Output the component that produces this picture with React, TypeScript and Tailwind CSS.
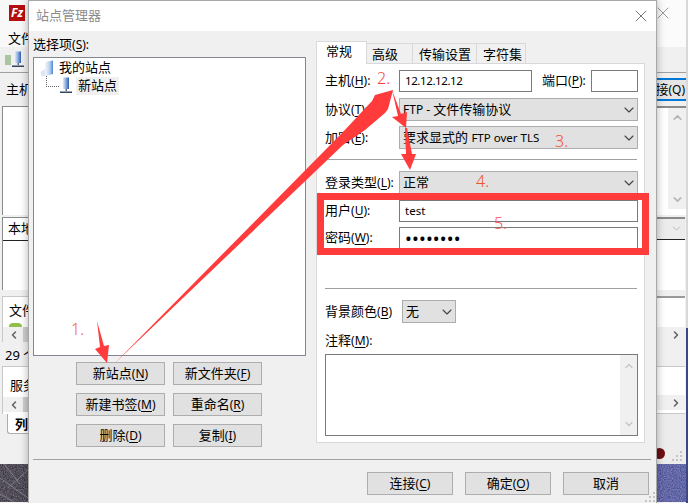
import React from 'react';
import { ChevronDown, ChevronLeft, ChevronRight, ChevronUp, X } from 'lucide-react';

const FONT = '"Noto Sans", "Noto Sans CJK SC", sans-serif';

// 括号里带下划线的快捷键，如 主机(H):
const Key = ({ label, k, colon }: { label: string; k: string; colon?: boolean }) => (
    <span className="whitespace-nowrap">
        {label}
        <span className="text-[12px]">(<span className="underline underline-offset-2">{k}</span>){colon ? ':' : ''}</span>
    </span>
);

const Latin = ({ children }: { children: React.ReactNode }) => <span className="text-[11.5px]">{children}</span>;

const Button = ({ children, className }: { children: React.ReactNode; className: string }) => (
    <div className={`h-[23px] flex items-center justify-center bg-[#e1e1e1] border border-[#adadad] ${className}`}>{children}</div>
);

const Select = ({ children, className }: { children: React.ReactNode; className: string }) => (
    <div className={`h-[23px] flex items-center justify-between bg-[#e1e1e1] border border-[#adadad] pl-[3px] ${className}`}>
        <span className="whitespace-nowrap">{children}</span>
        <ChevronDown size={16} strokeWidth={1.7} className="text-[#444]" />
    </div>
);

const Input = ({ children, className }: { children?: React.ReactNode; className: string }) => (
    <div className={`flex items-center bg-white border border-[#7a7a7a] pl-[5px] ${className}`}>{children}</div>
);

const FormRow = ({ label, children, className }: { label: React.ReactNode; children: React.ReactNode; className: string }) => (
    <div className={`flex items-center ${className}`}>
        <div className="w-[74px] shrink-0">{label}</div>
        {children}
    </div>
);

const ServerIcon = ({ id }: { id: string }) => (
    <svg width="14" height="17" viewBox="0 0 14 17" className="shrink-0">
        <defs>
            <linearGradient id={id} x1="0" y1="0" x2="1" y2="0">
                <stop offset="0%" stopColor="#dfe9f7" />
                <stop offset="55%" stopColor="#7fa3dc" />
                <stop offset="100%" stopColor="#2f5da8" />
            </linearGradient>
        </defs>
        <path d="M4 0.5 H10 V12 H4 Z" fill={`url(#${id})`} />
        <path d="M6.5 12 H8 V14 H6.5 Z" fill="#5a6a80" />
        <path d="M1 14.5 H13 V16 H1 Z" fill="#33445f" />
    </svg>
);

const FolderIcon = () => (
    <svg width="14" height="17" viewBox="0 0 14 17" className="shrink-0">
        <defs>
            <linearGradient id="folder-g" x1="0" y1="0" x2="1" y2="0">
                <stop offset="0%" stopColor="#f4f7fb" />
                <stop offset="60%" stopColor="#b9d0ee" />
                <stop offset="100%" stopColor="#4d86d3" />
            </linearGradient>
        </defs>
        <path d="M5 2 L13 0.5 V14 L5 16 Z" fill="url(#folder-g)" />
        <path d="M0.5 12 L5 9 V16 H1.5 Z" fill="#dce6f2" />
    </svg>
);

// 窗口右下角的拖动点
const Grip = ({ className }: { className: string }) => (
    <svg width="11" height="11" viewBox="0 0 11 11" className={className}>
        <path d="M8 0 h2 v2 h-2 Z M4 4 h2 v2 h-2 Z M8 4 h2 v2 h-2 Z M0 8 h2 v2 h-2 Z M4 8 h2 v2 h-2 Z M8 8 h2 v2 h-2 Z" fill="#c4c4c4" />
    </svg>
);

// 桌面壁纸的噪点
const Wallpaper = ({ id, matrix, base, lines }: { id: string; matrix: string; base: string; lines?: boolean }) => (
    <svg width="100%" height="38" className="block">
        <filter id={id}>
            <feTurbulence type="fractalNoise" baseFrequency="0.9" numOctaves="2" />
            <feColorMatrix type="matrix" values={matrix} />
        </filter>
        <rect width="100%" height="38" fill={base} />
        <rect width="100%" height="38" filter={`url(#${id})`} />
        {lines && <path d="M0 14 L28 34 M0 30 L14 38 M4 0 L20 20 M28 6 L8 24" stroke="#8d8a94" strokeWidth="0.8" />}
    </svg>
);

const HScroll = ({ right }: { right?: boolean }) => (
    <div className={`h-[15px] shrink-0 bg-[#f0f0f0] flex items-center text-[#606060] ${right ? 'justify-end pr-[3px]' : 'pl-[5px]'}`}>
        {right ? <ChevronRight size={12} strokeWidth={3} /> : <ChevronLeft size={12} strokeWidth={3} />}
        {!right && <div className="ml-[3px] flex-1 h-full bg-[#cdcdcd]" />}
    </div>
);

const LeftStrip = () => (
    <div className="w-[28px] shrink-0 h-full flex flex-col overflow-hidden bg-[#f0f0f0] text-[13px]">
        <div className="h-[31px] bg-[#f8f8f8] pt-[5px] pl-[9px] shrink-0">
            <div className="w-[16px] h-[16px] bg-[#b30f0f] flex items-center justify-center text-white text-[12px] leading-none font-bold italic">Fz</div>
        </div>
        <div className="h-[16px] bg-[#f8f8f8] pl-[8px] leading-[14px] whitespace-nowrap shrink-0">文件</div>
        <div className="h-[25px] pl-[5px] pt-[4px] shrink-0 flex">
            <div className="w-[6px] h-[10px] mt-[4px] bg-[#a9c79f]" />
            <ServerIcon id="srv-bg" />
        </div>
        <div className="h-[34px] border-t border-[#a0a0a0] pl-[6px] pt-[7px] whitespace-nowrap shrink-0">主机</div>
        <div className="h-[109px] ml-[2px] bg-white border-l border-t border-[#8a8a8a] shrink-0" />
        <div className="h-[2px] shrink-0" />
        <div className="h-[73px] ml-[2px] bg-white border-l border-t border-[#8a8a8a] shrink-0">
            <div className="h-[23px] pl-[5px] border-b border-[#222] whitespace-nowrap pt-[1px]">本地</div>
        </div>
        <div className="h-[6px] shrink-0" />
        <div className="h-[46px] ml-[2px] bg-white border-l border-t border-[#c8c8c8] shrink-0 overflow-hidden">
            <div className="h-[26px] pl-[6px] pt-[4px] whitespace-nowrap">文件</div>
            <div className="ml-[6px] w-[13px] h-[4px] bg-[#8fc04a] rounded-t-full" />
            <HScroll />
        </div>
        <div className="h-[24px] pl-[5px] pt-[4px] whitespace-nowrap shrink-0">29 个</div>
        <div className="h-[48px] ml-[2px] bg-white border-l border-t border-[#c8c8c8] shrink-0 overflow-hidden">
            <div className="h-[30px] pl-[7px] pt-[9px] whitespace-nowrap">服务</div>
            <HScroll />
        </div>
        <div className="h-[50px] shrink-0 pl-[7px]">
            <div className="h-[20px] bg-white border-l border-b border-[#adadad] rounded-bl-[3px] pl-[7px] font-bold whitespace-nowrap leading-[20px]">列</div>
        </div>
        <Wallpaper id="wp-left" base="#2f2b36" lines matrix="0 0 0 0 0.5  0 0 0 0 0.47  0 0 0 0 0.55  0 0 0 0.7 -0.1" />
    </div>
);

const RightStrip = () => (
    <div className="w-[31px] shrink-0 h-full flex overflow-hidden bg-[#f0f0f0] text-[13px]">
        <div className="w-[29px] shrink-0 h-full flex flex-col">
            <div className="h-[47px] bg-[#fbfbfb] shrink-0 pt-[3px] text-[#999]">
                <X size={20} strokeWidth={1.2} className="-ml-[4px]" />
            </div>
            <div className="h-[25px] shrink-0" />
            <div className="h-[34px] border-t border-[#a0a0a0] shrink-0 pt-[5px]">
                <div className="h-[23px] bg-[#e5e5e5] border-y-2 border-[#0078d7] whitespace-nowrap flex items-center justify-end leading-none pr-[1px]">接<span className="text-[12px]">(Q)</span></div>
            </div>
            <div className="h-[109px] bg-white border-t-2 border-[#8a8a8a] shrink-0 flex justify-end">
                <div className="w-[18px] h-[101px] bg-[#f0f0f0] flex flex-col justify-between items-center py-[3px] text-[#b5b5b5]">
                    <ChevronUp size={13} strokeWidth={3} />
                    <ChevronDown size={13} strokeWidth={3} />
                </div>
            </div>
            <div className="h-[2px] shrink-0" />
            <div className="h-[73px] mr-[1px] bg-white border-t-2 border-[#8a8a8a] shrink-0">
                <div className="h-[21px] bg-[#ececec] border-b border-[#222] flex justify-end pr-[2px] pt-[3px] text-[#b0b0b0]">
                    <ChevronDown size={13} strokeWidth={1.5} />
                </div>
            </div>
            <div className="h-[6px] shrink-0" />
            <div className="h-[46px] mr-[1px] bg-white border-t-2 border-[#9a9a9a] shrink-0 flex flex-col justify-end">
                <HScroll right />
            </div>
            <div className="h-[24px] shrink-0" />
            <div className="h-[48px] mr-[1px] bg-white border-t border-[#c8c8c8] border-b shrink-0 flex flex-col justify-end pb-[3px]">
                <HScroll right />
            </div>
            <div className="h-[50px] shrink-0 bg-[#ececec] relative">
                <div className="w-[11px] h-[11px] rounded-full bg-[#6e0f12] mt-[34px] -ml-[3px]" />
                <Grip className="absolute right-[3px] bottom-[2px]" />
            </div>
            <Wallpaper id="wp-right" base="#3c4688" matrix="0 0 0 0 0.42  0 0 0 0 0.38  0 0 0 0 0.75  0 0 0 0.9 -0.1" />
        </div>
        <div className="w-[2px] shrink-0 h-full flex flex-col">
            <div className="h-[328px] shrink-0 bg-[#d8d8d8]" />
            <div className="flex-1 bg-[#3c4688]" />
        </div>
    </div>
);

const TabPanel = () => (
    <div className="h-[380px] bg-white border border-[#d9d9d9] pl-[8px] pr-[6px] pt-[6px] flex flex-col">
        <FormRow label={<Key label="主机" k="H" colon />} className="h-[22px]">
            <Input className="w-[133px] h-[22px]"><span className="text-[11.5px] tracking-[-0.4px]">12.12.12.12</span></Input>
            <div className="w-[59px] pl-[10px]"><Key label="端口" k="P" colon /></div>
            <Input className="w-[47px] h-[22px]" />
        </FormRow>
        <FormRow label={<Key label="协议" k="T" colon />} className="h-[23px] mt-[6px]">
            <Select className="w-[239px]"><span className="text-[12px]">FTP - </span>文件传输协议</Select>
        </FormRow>
        <FormRow label={<Key label="加密" k="E" colon />} className="h-[23px] mt-[5px]">
            <Select className="w-[239px]">要求显式的 <Latin>FTP over TLS</Latin></Select>
        </FormRow>
        <div className="h-px bg-[#a0a0a0] mt-[10px] w-[312px]" />
        <FormRow label={<Key label="登录类型" k="L" colon />} className="h-[23px] mt-[11px]">
            <Select className="w-[239px]">正常</Select>
        </FormRow>
        <FormRow label={<Key label="用户" k="U" colon />} className="h-[22px] mt-[6px]">
            <Input className="w-[239px] h-[22px]"><Latin>test</Latin></Input>
        </FormRow>
        <FormRow label={<Key label="密码" k="W" colon />} className="h-[22px] mt-[5px]">
            <Input className="w-[239px] h-[22px]"><span className="text-[18px] leading-none tracking-[0.2px]">••••••••</span></Input>
        </FormRow>
        <div className="h-px bg-[#a0a0a0] mt-[39px] w-[312px]" />
        <div className="flex items-center h-[23px] mt-[11px]">
            <div className="w-[77px] shrink-0"><Key label="背景颜色" k="B" /></div>
            <Select className="w-[54px]">无</Select>
        </div>
        <div className="h-[14px] leading-[14px] mt-[10px]"><Key label="注释" k="M" colon /></div>
        <div className="h-[82px] w-[313px] mt-[7px] bg-white border border-[#7a7a7a] flex justify-end">
            <div className="w-[17px] bg-[#f0f0f0] flex flex-col justify-between items-center py-[5px] text-[#c4c4c4]">
                <ChevronUp size={12} strokeWidth={2.5} />
                <ChevronDown size={12} strokeWidth={2.5} />
            </div>
        </div>
    </div>
);

const Annotations = () => (
    <div className="absolute inset-0 z-20 pointer-events-none">
        <svg width="688" height="503" className="absolute inset-0">
            <g fill="#ff3b3b">
                <path d="M97 321 L104 346 L109 345 L107 363 L95 349 L100 347 Z" />
                <path d="M115 363 L343 132 L372 101 L375 95 L393 90 L388 109 L385 113 L365 130 L343 145 Z" />
                <path d="M392 90 L401 114 L407 112 L406 128 L392 117 L398 116 Z" />
                <path d="M405 128 L407 128 L412 154 L416 154 L410 170 L401 154 L406 154 Z" />
            </g>
            <rect x="320.5" y="196.5" width="325" height="55" fill="none" stroke="#ff3b3b" strokeWidth="7" />
        </svg>
        <span className="absolute left-[71px] top-[319px] text-[16px] leading-[20px] font-light text-[#f0612e]">1.</span>
        <span className="absolute left-[377px] top-[68px] text-[16px] leading-[20px] font-light text-[#ff3b3b]">2.</span>
        <span className="absolute left-[555px] top-[131px] text-[16px] leading-[20px] font-light text-[#f0512e]">3.</span>
        <span className="absolute left-[476px] top-[171px] text-[16px] leading-[20px] font-light text-[#f0512e]">4.</span>
        <span className="absolute left-[494px] top-[213px] text-[16px] leading-[20px] font-light text-[#ff5050]">5.</span>
    </div>
);

export default function App() {
    return (
        <div className="relative w-[688px] h-[503px] overflow-hidden flex text-[13px] text-black bg-[#f0f0f0]" style={{ fontFamily: FONT }}>
            <LeftStrip />

            {/* 站点管理器 dialog */}
            <div className="relative z-10 w-[629px] shrink-0 h-full flex flex-col bg-[#f0f0f0] border-t border-x border-[#a8a8a8] shadow-[0_0_8px_rgba(0,0,0,0.3)]">
                <div className="h-[30px] shrink-0 bg-white flex items-center justify-between pl-[7px] pr-[5px] text-[#8c8c8c]">
                    <span>站点管理器</span>
                    <X size={20} strokeWidth={1.2} className="text-[#777]" />
                </div>

                <div className="h-[412px] shrink-0 flex pl-[4px]">
                    <div className="w-[273px] shrink-0 flex flex-col">
                        <div className="h-[26px] shrink-0 pt-[5px] leading-[16px]"><Key label="选择项" k="S" colon /></div>
                        <div className="h-[299px] shrink-0 bg-white border border-[#828790] pl-[6px] pt-[1px]">
                            <div className="flex items-center gap-[5px] h-[18px]">
                                <FolderIcon />
                                <span>我的站点</span>
                            </div>
                            <div className="flex items-center h-[19px] pl-[6px] -mt-[1px]">
                                <div className="w-[13px] h-[11px] -mt-[9px] border-l border-b border-dotted border-[#666]" />
                                <ServerIcon id="srv-tree" />
                                <span className="ml-[3px] px-[2px] bg-[#f0f0f0] h-[18px] leading-[16px]">新站点</span>
                            </div>
                        </div>
                        <div className="grid grid-cols-[89px_89px] gap-x-[8px] gap-y-[8px] pl-[43px] mt-[6px]">
                            <Button className=""><Key label="新站点" k="N" /></Button>
                            <Button className=""><Key label="新文件夹" k="F" /></Button>
                            <Button className=""><Key label="新建书签" k="M" /></Button>
                            <Button className=""><Key label="重命名" k="R" /></Button>
                            <Button className=""><Key label="删除" k="D" /></Button>
                            <Button className=""><Key label="复制" k="I" /></Button>
                        </div>
                    </div>

                    <div className="w-[329px] shrink-0 ml-[10px] pt-[10px] flex flex-col">
                        <div className="flex items-end h-[23px] shrink-0 relative z-10">
                            <div className="w-[51px] h-[23px] bg-white border-x border-t border-[#d9d9d9] pl-[9px] leading-[19px]">常规</div>
                            <div className="w-[46px] h-[20px] bg-[#f0f0f0] border-t border-r border-[#d9d9d9] pl-[5px] leading-[20px] mb-px">高级</div>
                            <div className="w-[64px] h-[20px] bg-[#f0f0f0] border-t border-r border-[#d9d9d9] pl-[6px] leading-[20px] mb-px">传输设置</div>
                            <div className="w-[49px] h-[20px] bg-[#f0f0f0] border-t border-r border-[#d9d9d9] pl-[6px] leading-[20px] mb-px">字符集</div>
                        </div>
                        <div className="-mt-px shrink-0"><TabPanel /></div>
                    </div>
                </div>

                <div className="h-px shrink-0 bg-[#a0a0a0] ml-[4px] w-[618px] mt-[16px]" />
                <div className="flex justify-end gap-[12px] pr-[7px] mt-[12px]">
                    <Button className="w-[86px]"><Key label="连接" k="C" /></Button>
                    <Button className="w-[86px]"><Key label="确定" k="O" /></Button>
                    <Button className="w-[86px]">取消</Button>
                </div>
                <Grip className="absolute right-[0px] bottom-[0px]" />
            </div>

            <RightStrip />
            <Annotations />
        </div>
    );
}
